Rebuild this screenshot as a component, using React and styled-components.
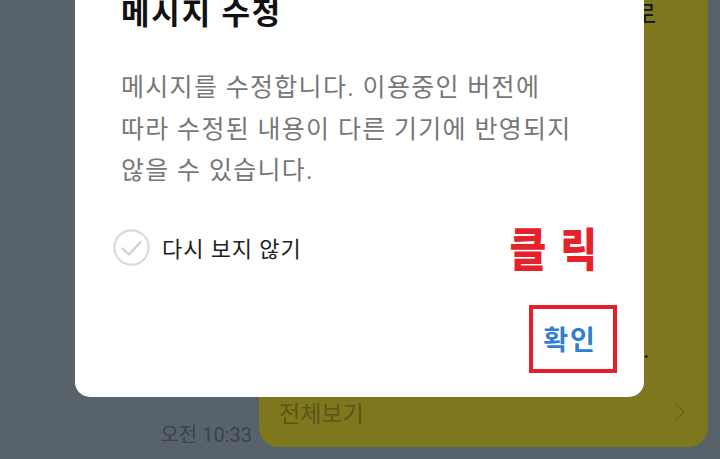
import React from 'react';
import styled, { createGlobalStyle } from 'styled-components';

const GlobalStyle = createGlobalStyle`
  html, body { margin: 0; padding: 0; }
  body {
    font-family: Roboto, "Noto Sans CJK KR", "Noto Sans", sans-serif;
    background: #58626b;
  }
`;

// only the line ends of the first and last lines peek out beside the dialog
const messageLines = [
  '다음 주 회의 장소는 본사 별관으로',
  '변경되었습니다.',
  '시간은 기존과 같이 오후',
  '2시에 시작합니다.',
  '참석하시는 분들은 미리',
  '자료를 확인해 주시고',
  '궁금한 점이 있으시면',
  '담당자에게 문의해 주세요.',
  '항상 협조해 주셔서 감사하며',
  '변경된 일정을 다시 확인해 주세요.',
];

function CheckCircle() {
  return (
    <svg width="37" height="37" viewBox="0 0 37 37" fill="none">
      <circle cx="18.5" cy="18.5" r="17.2" stroke="#dadada" strokeWidth="2.2" />
      <path d="M9.5 19.5 L16 25.5 L27.5 13" stroke="#cfcfcf" strokeWidth="2.2" strokeLinecap="round" strokeLinejoin="round" />
    </svg>
  );
}

function Chevron() {
  return (
    <svg width="12" height="20" viewBox="0 0 12 20" fill="none">
      <path d="M1.5 1.5 L10 10 L1.5 18.5" stroke="#6a6419" strokeWidth="1.6" />
    </svg>
  );
}

export default function App() {
  return (
    <>
      <GlobalStyle />
      <Screen>
        <MessageRow>
          <Time>오전 10:33</Time>
          <Bubble>
            <MessageText>
              {messageLines.map((line, i) => (
                <MessageLine key={i} $tight={i === messageLines.length - 1}>
                  {line}
                </MessageLine>
              ))}
            </MessageText>
            <BubbleFooter>
              <span>전체보기</span>
              <Chevron />
            </BubbleFooter>
          </Bubble>
        </MessageRow>

        <Dialog>
          <Title>메시지 수정</Title>
          <Body>
            메시지를 수정합니다. 이용중인 버전에<br />
            따라 수정된 내용이 다른 기기에 반영되지<br />
            않을 수 있습니다.
          </Body>
          <OptionRow>
            <CheckLabel>
              <CheckCircle />
              <span>다시 보지 않기</span>
            </CheckLabel>
            <ClickNote>클릭</ClickNote>
          </OptionRow>
          <ButtonRow>
            <ConfirmButton>확인</ConfirmButton>
          </ButtonRow>
        </Dialog>
      </Screen>
    </>
  );
}

const Screen = styled.div`
  position: relative;
  width: 720px;
  height: 459px;
  overflow: hidden;
  background: #58626b;
  display: flex;
  flex-direction: column;
  justify-content: flex-end;
`;

const MessageRow = styled.div`
  display: flex;
  justify-content: flex-end;
  align-items: flex-end;
  gap: 7px;
  padding: 0 12px 12px 0;
`;

const Time = styled.span`
  font-size: 20px;
  line-height: 24px;
  color: #3c434a;
  white-space: nowrap;
`;

const Bubble = styled.div`
  width: 449px;
  box-sizing: border-box;
  flex-shrink: 0;
  background: #7f771e;
  border-radius: 20px;
  padding: 14px 0 0 20px;
`;

const MessageText = styled.div`
  font-size: 25px;
  line-height: 37.2px;
  letter-spacing: 1.35px;
  color: #111111;
`;

const MessageLine = styled.div`
  white-space: nowrap;
  letter-spacing: ${props => (props.$tight ? '0.95px' : 'inherit')};
`;

const BubbleFooter = styled.div`
  display: flex;
  align-items: center;
  justify-content: space-between;
  padding: 30px 22px 21px 0;
  height: 28px;
  font-size: 23px;
  color: #5b5518;
`;

const Dialog = styled.div`
  position: absolute;
  left: 75px;
  top: -30px;
  width: 569px;
  box-sizing: border-box;
  background: #ffffff;
  border-radius: 15px;
  padding: 24px 27px 24px 46px;
  display: flex;
  flex-direction: column;
`;

const Title = styled.h2`
  margin: 0;
  font-size: 31px;
  line-height: 40px;
  font-weight: 700;
  letter-spacing: 1.8px;
  color: #111111;
`;

const Body = styled.p`
  margin: 33px 0 0;
  font-size: 25px;
  line-height: 41.5px;
  letter-spacing: 1.3px;
  color: #777777;
`;

const OptionRow = styled.div`
  margin-top: 37px;
  height: 37px;
  display: flex;
  align-items: center;
  justify-content: space-between;
`;

const CheckLabel = styled.label`
  display: flex;
  align-items: center;
  gap: 12px;
  margin-left: -8px;
  font-size: 22px;
  letter-spacing: 0.9px;
  color: #1e1e1e;
`;

const ClickNote = styled.span`
  margin-right: 6px;
  margin-top: 6px;
  font-size: 40px;
  line-height: 37px;
  font-weight: 900;
  letter-spacing: 14px;
  color: #e6212b;
  transform: scaleY(1.15);
`;

const ButtonRow = styled.div`
  margin-top: 39px;
  display: flex;
  justify-content: flex-end;
`;

const ConfirmButton = styled.button`
  width: 88px;
  height: 68px;
  box-sizing: border-box;
  border: 4px solid #e3202a;
  background: #ffffff;
  font-family: inherit;
  font-size: 27px;
  font-weight: 700;
  letter-spacing: 2px;
  color: #2e7fd2;
  padding: 0 6px 0 0;
  cursor: pointer;
`;
